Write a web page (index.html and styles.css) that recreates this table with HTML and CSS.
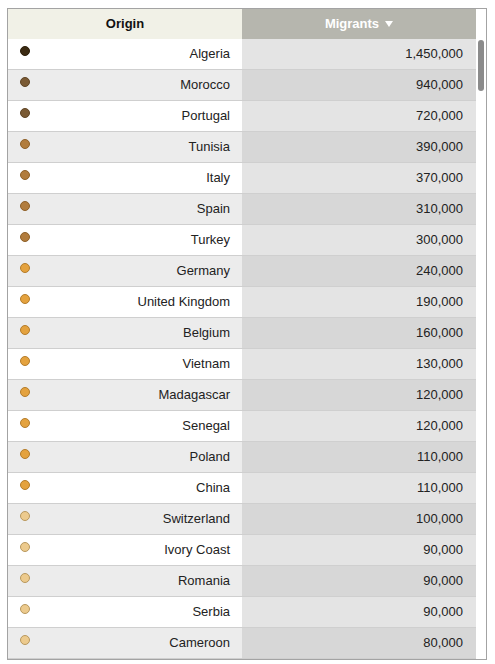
FILE: index.html
```html
<!DOCTYPE html>
<html>
<head>
<meta charset="utf-8">
<link rel="stylesheet" href="styles.css">
</head>
<body>
<div class="frame">
  <div class="table">
    <div class="row head">
      <div class="cell origin">Origin</div>
      <div class="cell value">Migrants <span class="arrow"></span></div>
    </div>
    <div class="row"><div class="cell origin"><span class="dot c1"></span>Algeria</div><div class="cell value">1,450,000</div></div>
    <div class="row"><div class="cell origin"><span class="dot c2"></span>Morocco</div><div class="cell value">940,000</div></div>
    <div class="row"><div class="cell origin"><span class="dot c2"></span>Portugal</div><div class="cell value">720,000</div></div>
    <div class="row"><div class="cell origin"><span class="dot c3"></span>Tunisia</div><div class="cell value">390,000</div></div>
    <div class="row"><div class="cell origin"><span class="dot c3"></span>Italy</div><div class="cell value">370,000</div></div>
    <div class="row"><div class="cell origin"><span class="dot c3"></span>Spain</div><div class="cell value">310,000</div></div>
    <div class="row"><div class="cell origin"><span class="dot c3"></span>Turkey</div><div class="cell value">300,000</div></div>
    <div class="row"><div class="cell origin"><span class="dot c4"></span>Germany</div><div class="cell value">240,000</div></div>
    <div class="row"><div class="cell origin"><span class="dot c4"></span>United Kingdom</div><div class="cell value">190,000</div></div>
    <div class="row"><div class="cell origin"><span class="dot c4"></span>Belgium</div><div class="cell value">160,000</div></div>
    <div class="row"><div class="cell origin"><span class="dot c4"></span>Vietnam</div><div class="cell value">130,000</div></div>
    <div class="row"><div class="cell origin"><span class="dot c4"></span>Madagascar</div><div class="cell value">120,000</div></div>
    <div class="row"><div class="cell origin"><span class="dot c4"></span>Senegal</div><div class="cell value">120,000</div></div>
    <div class="row"><div class="cell origin"><span class="dot c4"></span>Poland</div><div class="cell value">110,000</div></div>
    <div class="row"><div class="cell origin"><span class="dot c4"></span>China</div><div class="cell value">110,000</div></div>
    <div class="row"><div class="cell origin"><span class="dot c5"></span>Switzerland</div><div class="cell value">100,000</div></div>
    <div class="row"><div class="cell origin"><span class="dot c5"></span>Ivory Coast</div><div class="cell value">90,000</div></div>
    <div class="row"><div class="cell origin"><span class="dot c5"></span>Romania</div><div class="cell value">90,000</div></div>
    <div class="row"><div class="cell origin"><span class="dot c5"></span>Serbia</div><div class="cell value">90,000</div></div>
    <div class="row"><div class="cell origin"><span class="dot c5"></span>Cameroon</div><div class="cell value">80,000</div></div>
  </div>
  <div class="track"><div class="thumb"></div></div>
</div>
</body>
</html>
```
FILE: styles.css
```css
html, body {
  margin: 0;
  padding: 0;
  background: #fff;
}
body {
  font-family: "Liberation Sans", Arial, sans-serif;
  font-size: 13px;
  color: #222;
}
.frame {
  margin: 8px 0 0 7px;
  width: 478px;
  height: 650px;
  border: 1px solid #a3a3a3;
  display: flex;
  overflow: hidden;
}
.table {
  width: 468px;
  display: flex;
  flex-direction: column;
}
.row {
  display: grid;
  grid-template-columns: 234px 234px;
  height: 30px;
  border-bottom: 1px solid #cfcfcf;
}
.row.head {
  border-bottom: none;
  font-weight: bold;
}
.cell {
  display: flex;
  align-items: center;
  padding: 0 12px 2px 13px;
}
.origin {
  justify-content: flex-end;
  position: relative;
  background: #fff;
}
.value {
  justify-content: flex-end;
  background: #e4e4e4;
  padding-right: 13px;
}
.row:nth-child(odd) .origin { background: #ececec; }
.row:nth-child(odd) .value { background: #d7d7d7; }
.row.head .origin {
  background: #f1f1e7;
  justify-content: center;
  color: #111;
  padding: 0 0 2px 0;
}
.row.head .value {
  background: #b6b6ae;
  justify-content: center;
  color: #fff;
  padding: 0 0 2px 0;
  gap: 6px;
}
.arrow {
  width: 0;
  height: 0;
  border-left: 4.5px solid transparent;
  border-right: 4.5px solid transparent;
  border-top: 6px solid #fff;
  margin-top: 2px;
}
.dot {
  position: absolute;
  left: 12px;
  top: 7px;
  width: 8px;
  height: 8px;
  border-radius: 50%;
  border: 1px solid;
}
.c1 { background: #3b2a12; border-color: #2a1c08; }
.c2 { background: #7a5a34; border-color: #5f4424; }
.c3 { background: #b17c3d; border-color: #8e6028; }
.c4 { background: #e4a23e; border-color: #b47c2a; }
.c5 { background: #ecca8d; border-color: #b8985e; }
.track {
  width: 10px;
  padding-top: 31px;
  background: #fff;
}
.thumb {
  width: 6px;
  height: 51px;
  margin-left: 2px;
  border-radius: 3px;
  background: #8b8b8b;
}
```
